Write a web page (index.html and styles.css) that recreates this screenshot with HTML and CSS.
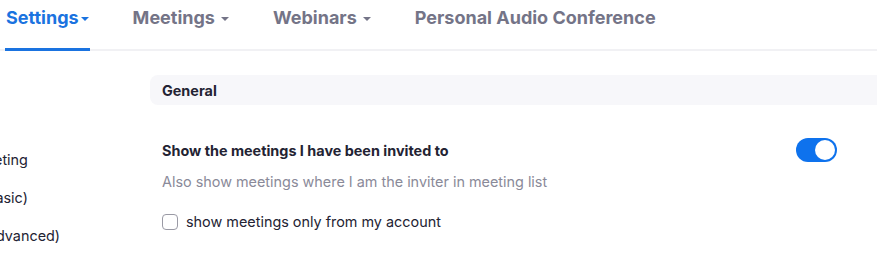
FILE: index.html
```html
<!DOCTYPE html>
<html lang="en">
<head>
    <meta charset="UTF-8">
    <meta name="viewport" content="width=device-width, initial-scale=1.0">
    <title>Settings</title>
    <link rel="stylesheet" href="styles.css">
</head>
<body>
    <nav class="tabs">
        <a class="tab active" href="#">Settings<span class="caret"></span></a>
        <a class="tab" href="#">Meetings<span class="caret"></span></a>
        <a class="tab" href="#">Webinars<span class="caret"></span></a>
        <a class="tab" href="#">Personal Audio Conference</a>
    </nav>
    <div class="page">
        <aside class="side">
            <ul>
                <li>Schedule Meeting</li>
                <li>In Meeting (Basic)</li>
                <li>In Meeting (Advanced)</li>
            </ul>
        </aside>
        <main class="content">
            <div class="section-head">General</div>
            <div class="setting">
                <div class="setting-row">
                    <div class="setting-title">Show the meetings I have been invited to</div>
                    <label class="switch">
                        <input type="checkbox" checked>
                        <span class="knob"></span>
                    </label>
                </div>
                <div class="setting-desc">Also show meetings where I am the inviter in meeting list</div>
                <label class="check">
                    <input type="checkbox">
                    <span class="box"></span>
                    show meetings only from my account
                </label>
            </div>
        </main>
    </div>
</body>
</html>
```

FILE: styles.css
```css
body {
    margin: 0;
    width: 877px;
    overflow: hidden;
    background-color: #fff;
    font-family: Inter, "Noto Sans", Arial, sans-serif;
    color: #232333;
}

.tabs {
    display: flex;
    gap: 42px;
    height: 51px;
    padding-left: 5px;
    box-shadow: inset 0 -2px 0 #f1f1f4;
}

.tab {
    display: flex;
    align-items: flex-start;
    padding: 7px 1px 0;
    height: 41px;
    border-bottom: 3px solid transparent;
    font-size: 18px;
    font-weight: 700;
    line-height: 22px;
    color: #747487;
    text-decoration: none;
}

.tab.active {
    color: #1a73e0;
    border-bottom-color: #1a73e0;
}

.caret {
    width: 0;
    height: 0;
    margin: 10px 0 0 6px;
    border-left: 4px solid transparent;
    border-right: 4px solid transparent;
    border-top: 4px solid currentColor;
}

.tab.active .caret {
    margin-left: 2px;
}

/* sidebar is scrolled off to the left */
.page {
    display: flex;
}

.side {
    flex: none;
    width: 245px;
    margin-left: -95px;
}

.side ul {
    list-style: none;
    margin: 0;
    padding: 0;
}

.side li {
    margin-top: 18px;
    font-size: 14.4px;
    line-height: 20px;
    white-space: nowrap;
}

.side li:first-child {
    margin-top: 99px;
}

.content {
    flex: none;
    width: 750px;
    padding-top: 24px;
}

.section-head {
    height: 30px;
    padding-left: 12px;
    border-radius: 8px 0 0 8px;
    background-color: #f7f7fa;
    font-size: 14.4px;
    font-weight: 700;
    line-height: 31px;
}

.setting {
    padding: 33px 63px 0 12px;
}

.setting-row {
    display: flex;
    align-items: center;
    justify-content: space-between;
    height: 24px;
}

.setting-title {
    font-size: 14.4px;
    font-weight: 700;
    line-height: 20px;
    margin-top: 2px;
}

.switch {
    position: relative;
    width: 41px;
    height: 24px;
}

.switch input {
    display: none;
}

.knob {
    display: block;
    height: 100%;
    border-radius: 12px;
    background-color: #0e72ed;
}

.knob::after {
    content: "";
    position: absolute;
    top: 2px;
    right: 2px;
    width: 20px;
    height: 20px;
    border-radius: 50%;
    background-color: #fff;
}

.setting-desc {
    margin-top: 10px;
    font-size: 14.4px;
    line-height: 20px;
    color: #8a8a99;
}

.check {
    display: flex;
    align-items: center;
    gap: 8px;
    margin-top: 20px;
    font-size: 14.4px;
    line-height: 20px;
}

.check input {
    display: none;
}

.box {
    width: 14px;
    height: 14px;
    border: 1px solid #9a9aa5;
    border-radius: 4px;
}
```
